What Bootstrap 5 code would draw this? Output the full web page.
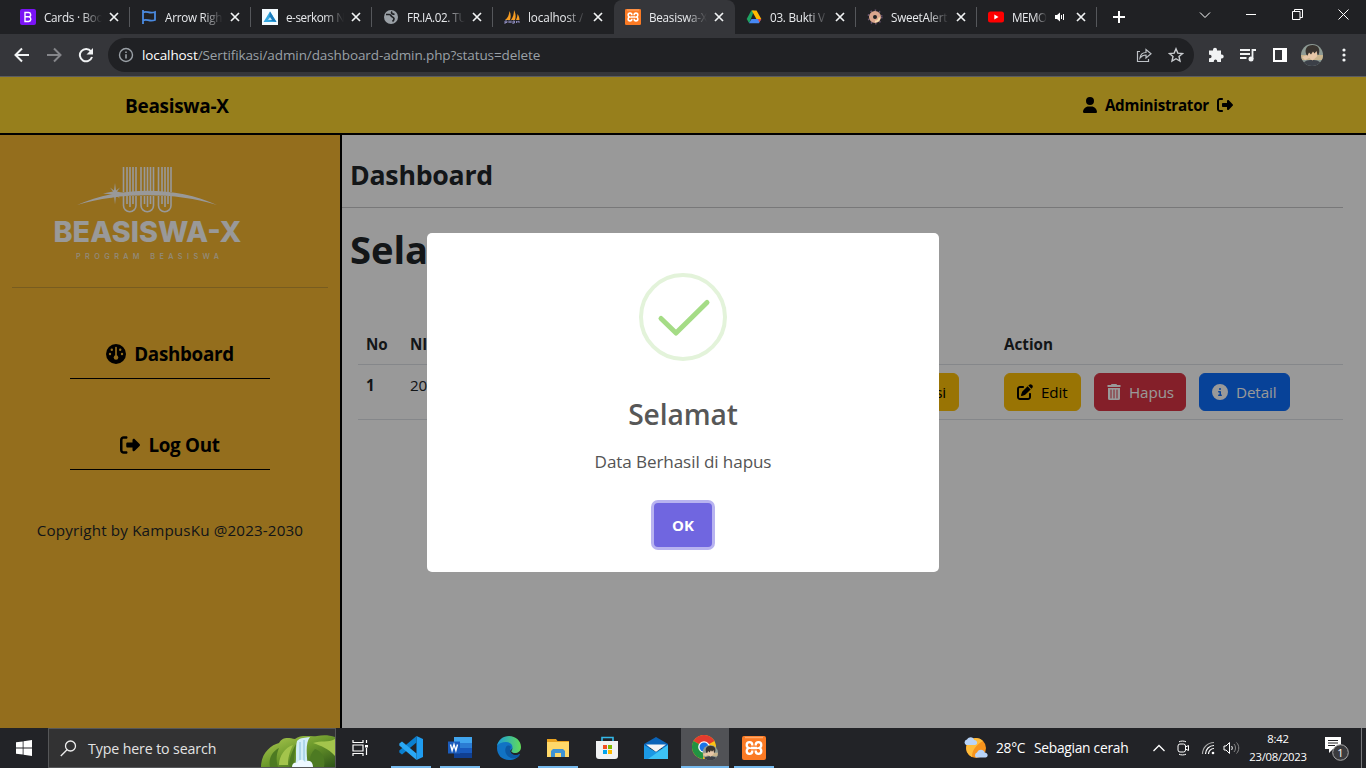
<!DOCTYPE html>
<html lang="id">
<head>
<meta charset="utf-8">
<meta name="viewport" content="width=device-width, initial-scale=1">
<title>Beasiswa-X</title>
<link href="https://cdn.jsdelivr.net/npm/bootstrap@5.3.0/dist/css/bootstrap.min.css" rel="stylesheet">
<style>
body{width:1366px;height:768px;overflow:hidden;font-family:"Open Sans","Noto Sans",sans-serif;font-size:15.2px;line-height:24px;letter-spacing:-.1px}
svg{display:block;flex:none}
.tabstrip{height:34px;background:#202124;padding-left:9px}
.tab-item{width:121px;height:34px;padding-left:11px;position:relative;color:#e8eaed}
.tab-item::after{content:"";position:absolute;right:0;top:7px;width:1px;height:20px;background:#55575b}
.tab-item.on{background:#35363a;border-radius:8px 8px 0 0}
.tab-item.on::after,.tab-item.noline::after{display:none}
.tab-title{width:58px;margin-left:8px;font-size:11.7px;line-height:16px;overflow:hidden;white-space:nowrap;letter-spacing:-.25px;-webkit-mask-image:linear-gradient(90deg,#000 65%,transparent);mask-image:linear-gradient(90deg,#000 65%,transparent)}
.tab-x{margin-left:7px}
.winctl{height:29px}
.winctl>span{width:46px;display:flex;justify-content:center;align-items:center}
.toolrow{height:43px;background:#35363a;border-bottom:1px solid #5c5d60;padding:0 6px}
.slot{width:32px;height:34px;display:flex;align-items:center;justify-content:center;flex:none}
.omni{width:1086px;height:34px;border-radius:17px;background:#202124;margin:0 6px;padding-left:10px;padding-right:2px;font-size:13.5px;letter-spacing:-.1px;color:#9aa0a6}
.omni b{font-weight:400;color:#fff}
.viewport{height:651px;position:relative}
.topbar{height:58px;background:#fcd430;border-bottom:2px solid #000;color:#000;font-weight:700;padding:0 133px 0 125px}
.admin-txt{font-size:15.2px;letter-spacing:-.25px}
.brand-txt{font-size:19px;letter-spacing:-.3px;padding-top:1px}
.side{width:342px;background:#f7b731;border-right:2px solid #000}
.side-hr{height:1px;background:#c99a35;margin:0 12px}
.side-link{width:200px;height:47px;border-bottom:1px solid #000;font-weight:700;font-size:18.8px;letter-spacing:-.3px;color:#000;padding-bottom:2px}
.main-title{font-size:26.7px;font-weight:700;line-height:34px;letter-spacing:-.25px}
.main-hello{font-size:38.2px;font-weight:700;line-height:48px}
.data-tbl{width:985px;margin:0 0 0 16px;table-layout:fixed}
.data-tbl th{font-weight:700;letter-spacing:0}
.btn{font-size:15.2px;line-height:24px;letter-spacing:-.1px;height:38px}
.btn-warning{background:#ffc107;color:#000}
.veil{position:absolute;inset:0;background:rgba(0,0,0,.4)}
.popup{width:512px;height:339px;background:#fff;border-radius:5px;padding-top:40px;color:#545454}
.popup-title{font-size:28.2px;font-weight:600;line-height:36px;margin-top:35px;color:#575757}
.popup-text{font-size:17.1px;line-height:24px;margin-top:18px}
.ok-btn{width:58px;height:44px;margin-top:29px;border-radius:4px;background:#7066e0;box-shadow:0 0 0 3px #b8b3f0;color:#fff;font-weight:700;font-size:15px;border:0}
.taskrow{height:40px;background:#222327;color:#fff}
.search-box{width:288px;height:40px;background:#323233;border:1px solid #555658;padding-left:11px;font-size:14.2px;color:#e3e3e3;position:relative}
.search-art{position:absolute;right:0;bottom:0}
.app{width:48px;height:40px;margin-right:1px;display:flex;align-items:center;justify-content:center;position:relative}
.app.run::after{content:"";position:absolute;left:4px;right:4px;bottom:0;height:2px;background:#76b9ed}
.app.now{background:#515256}.app.now::after{left:0;right:0}
.tray{width:24.25px;display:flex;justify-content:center}
.clock{width:68px;font-size:11.3px;line-height:18px;letter-spacing:-.25px}
</style>
</head>
<body class="d-flex flex-column">
<svg width="0" height="0" class="position-absolute">
<defs>
<symbol id="x" viewBox="0 0 10 10"><path d="M1 1l8 8M9 1L1 9" stroke="#f1f3f4" stroke-width="1.7"/></symbol>
<symbol id="out" viewBox="0 0 512 512"><path d="M377.9 105.9L500.7 228.7c7.2 7.2 11.3 17.1 11.3 27.3s-4.1 20.1-11.3 27.3L377.9 406.1c-6.4 6.4-15 9.9-24 9.9c-18.7 0-33.9-15.2-33.9-33.9l0-62.1-128 0c-17.7 0-32-14.3-32-32l0-64c0-17.7 14.3-32 32-32l128 0 0-62.1c0-18.7 15.2-33.9 33.9-33.9c9 0 17.6 3.6 24 9.9zM160 96L96 96c-17.7 0-32 14.3-32 32l0 256c0 17.7 14.3 32 32 32l64 0c17.7 0 32 14.3 32 32s-14.3 32-32 32l-64 0c-53 0-96-43-96-96L0 128C0 75 43 32 96 32l64 0c17.7 0 32 14.3 32 32s-14.3 32-32 32z"/></symbol>
<symbol id="xampp" viewBox="0 0 24 24"><rect width="24" height="24" rx="2" fill="#fb7a24"/><path d="M3 1.500h18" stroke="#ffa868" stroke-width="1.500"/><path d="M10.300 9.500V9a2.800 2.800 0 0 0-5.600 0c0 1.500.9 2.600 2.200 3-1.300.4-2.200 1.500-2.200 3a2.800 2.800 0 0 0 5.600 0v-.5M13.700 9.500V9a2.800 2.800 0 0 1 5.600 0c0 1.500-.9 2.600-2.200 3 1.300.4 2.200 1.500 2.200 3a2.800 2.800 0 0 1-5.600 0v-.5M9 12h6" fill="none" stroke="#fff" stroke-width="2.300"/></symbol>
<symbol id="face" viewBox="0 0 22 22"><clipPath id="fc"><circle cx="11" cy="11" r="11"/></clipPath><g clip-path="url(#fc)"><path fill="#8d9a94" d="M0 0h22v22H0z"/><path fill="#c9b48c" d="M0 11h22v5H0z"/><path fill="#3c4048" d="M1 22c1-5 5-6 10-6s9 1 10 6z"/><path fill="#e7c7a8" d="M7 6h9v6.500l-4.500 4L7 13zM1 13l5-2 2 3-4 2z"/><path fill="#39342f" d="M5.500 11C3 5 6 1 11.500 1S20 5 17.500 11l-1-.5L15.500 7l-2 2.500-1.500-2-2 3-2-2-1.500 3z"/></g></symbol>
</defs>
</svg>

<div class="tabstrip d-flex">
  <div class="tab-item d-flex align-items-center"><svg width="16" height="16" viewBox="0 0 16 16"><rect width="16" height="16" rx="2" fill="#7a13f5"/><path d="M5 3.500v9h3.600a2.400 2.400 0 0 0 .5-4.700A2.200 2.200 0 0 0 8.300 3.500zM5 7.800h3.500" fill="none" stroke="#fff" stroke-width="1.400"/></svg><span class="tab-title">Cards · Boo</span><svg class="tab-x" width="10" height="10"><use href="#x"/></svg></div>
  <div class="tab-item d-flex align-items-center"><svg width="16" height="16" viewBox="0 0 16 16"><path d="M2 1v14M2 3.500c4-2.500 6 2 12-.5v8c-6 2.500-8-2-12 .5" fill="none" stroke="#4a8ae0" stroke-width="1.800"/></svg><span class="tab-title">Arrow Righ</span><svg class="tab-x" width="10" height="10"><use href="#x"/></svg></div>
  <div class="tab-item d-flex align-items-center"><svg width="16" height="16" viewBox="0 0 16 16"><path fill="#f4fbff" d="M0 0h16v16H0z"/><path fill="#35a8e0" d="M8 2.500L14.500 13h-13z"/><path fill="#1679bb" d="M8 2.500L14.500 13 7 11z"/><path fill="#bfe7fa" d="M8 8l2 3H6z"/></svg><span class="tab-title" style="letter-spacing:-.45px">e-serkom N</span><svg class="tab-x" width="10" height="10"><use href="#x"/></svg></div>
  <div class="tab-item d-flex align-items-center"><svg width="16" height="16" viewBox="0 0 16 16"><circle cx="8" cy="8" r="7" fill="#9aa0a6"/><path d="M3 5.500h3.500c1.500 0 1.500 2 3 2.500s2.500 2.500 0 4.500M9 2.500c-1.500 2 .5 3 2.500 2.500" fill="none" stroke="#202124" stroke-width="1.700"/></svg><span class="tab-title" style="letter-spacing:-.4px">FR.IA.02. TU</span><svg class="tab-x" width="10" height="10"><use href="#x"/></svg></div>
  <div class="tab-item noline d-flex align-items-center"><svg width="16" height="16" viewBox="0 0 16 16"><path fill="#f69c22" d="M1 11C4 9 5 6 5.500 2 7 5 7 8 6 11zM7 11c2-3 3-6 3-10 2 4 2 7 1 10zM12 11c1-2 1.500-4 1.500-6 1.500 2 2 4 2 6z"/><path d="M1 15v-3h2v1.500H1M5 11.500V14m0-1h2m0-1.500V14M9 15v-3h1.500v2H9m3.500 0v-2l1 1 1.500-1v2" fill="none" stroke="#8a88b8"/></svg><span class="tab-title" style="letter-spacing:-.1px">localhost /</span><svg class="tab-x" width="10" height="10"><use href="#x"/></svg></div>
  <div class="tab-item on d-flex align-items-center"><svg width="16" height="16"><use href="#xampp"/></svg><span class="tab-title">Beasiswa-X</span><svg class="tab-x" width="10" height="10"><use href="#x"/></svg></div>
  <div class="tab-item d-flex align-items-center"><svg width="16" height="16" viewBox="0 0 16 16"><path fill="#1ea362" d="M5.300 1.500h2.900L3.200 14.300 .7 10z"/><path fill="#ffba00" d="M5.700 1.500h4.800L15.300 10h-4.900z"/><path fill="#4688f4" d="M5.500 10h9.800l-2.500 4.300H3z"/><path fill="#ea4335" d="M12 10h3.300l-2 3.500z"/></svg><span class="tab-title">03. Bukti V</span><svg class="tab-x" width="10" height="10"><use href="#x"/></svg></div>
  <div class="tab-item d-flex align-items-center"><svg width="16" height="16" viewBox="0 0 16 16"><circle cx="8" cy="8" r="6.800" fill="none" stroke="#6b5570" stroke-width="1.500" stroke-dasharray="1.500 3"/><circle cx="8" cy="8" r="4" fill="none" stroke="#dba68e" stroke-width="4"/><path d="M8 12.500a4.500 4.500 0 0 0 4.500-4" fill="none" stroke="#f7dcae" stroke-width="2"/></svg><span class="tab-title">SweetAlert</span><svg class="tab-x" width="10" height="10"><use href="#x"/></svg></div>
  <div class="tab-item d-flex align-items-center" style="width:120px"><svg width="16" height="16" viewBox="0 0 16 16"><rect y="2.500" width="16" height="11" rx="2.500" fill="#f00"/><path fill="#fff" d="M6.300 5.500L10.500 8l-4.200 2.500z"/></svg><span class="tab-title" style="width:35px;letter-spacing:-.5px">MEMO</span><svg class="ms-2" width="10" height="10" viewBox="0 0 10 10"><path fill="#fff" d="M0 3h2l3-2.500v9L2 7H0z"/><path d="M6.500 3v4M8.500 2v6" stroke="#fff"/></svg><svg style="margin-left:11px" width="10" height="10"><use href="#x"/></svg></div>
  <svg class="align-self-center" style="margin-left:15px" width="14" height="14"><path d="M7 1v12M1 7h12" stroke="#fff" stroke-width="2"/></svg>
  <div class="winctl d-flex ms-auto">
    <span><svg width="12" height="8"><path d="M1 1.500l5 5 5-5" fill="none" stroke="#fff"/></svg></span>
    <span><svg width="10" height="2"><path d="M0 .5h10" stroke="#fff"/></svg></span>
    <span><svg width="11" height="11"><path d="M.5 2.500h7.500v8H.5zM2.500 2.500V.5h8v8H8" fill="none" stroke="#fff"/></svg></span>
    <span><svg width="11" height="11"><path d="M.5.500l10 10M10.500.500l-10 10" stroke="#fff"/></svg></span>
  </div>
</div>

<div class="toolrow d-flex align-items-center">
  <span class="slot"><svg width="16" height="16"><path d="M15 8H2M8 1.500L1.500 8 8 14.500" fill="none" stroke="#f1f3f4" stroke-width="2"/></svg></span>
  <span class="slot"><svg width="16" height="16"><path d="M1 8h13M8 1.500L14.500 8 8 14.500" fill="none" stroke="#85868a" stroke-width="2"/></svg></span>
  <span class="slot"><svg width="16" height="16"><path d="M13 4.300A6.200 6.200 0 1 0 14 10" fill="none" stroke="#f1f3f4" stroke-width="2"/><path fill="#f1f3f4" d="M15 1v6.500H8.500z"/></svg></span>
  <div class="omni d-flex align-items-center">
    <svg width="16" height="16"><circle cx="8" cy="8" r="6.500" fill="none" stroke="#9aa0a6" stroke-width="1.400"/><path d="M8 7.200v4.300M8 4.500v1.600" stroke="#9aa0a6" stroke-width="1.600"/></svg>
    <span style="margin-left:8px"><b>localhost</b>/Sertifikasi/admin/dashboard-admin.php?status=delete</span>
    <span class="slot ms-auto"><svg width="16" height="16"><path d="M4 4.500H1.500v10h11V12M4 11c.5-4 3-5.500 6-5.500V2.500l5 4.300-5 4.200V8C7 8 5.500 9 4 11z" fill="none" stroke="#bdc1c6" stroke-width="1.200"/></svg></span>
    <span class="slot"><svg width="16" height="16"><path d="M8 1.800l1.800 4.300 4.700.4-3.500 3 1 4.600L8 11.700l-4 2.400 1-4.600-3.500-3 4.700-.4z" fill="none" stroke="#c8cbcf" stroke-width="1.400"/></svg></span>
  </div>
  <span class="slot"><svg width="16" height="16"><path fill="#f1f3f4" d="M1 3.500h4V2.800a2 2 0 0 1 4 0v.7h4v4h.7a2 2 0 0 1 0 4H13V15H9.200v-.8a1.700 1.700 0 0 0-3.400 0v.8H1v-3.800h.9a1.700 1.700 0 0 0 0-3.400H1z"/></svg></span>
  <span class="slot"><svg width="16" height="14"><path d="M0 2h10M0 6h10M0 10h6.500" stroke="#f1f3f4" stroke-width="1.800"/><path d="M12.500 11V2H16" fill="none" stroke="#f1f3f4" stroke-width="1.800"/><circle cx="11" cy="11" r="2.500" fill="#f1f3f4"/></svg></span>
  <span class="slot"><svg width="14" height="14"><path d="M1 1h12v12H1z" fill="none" stroke="#fff" stroke-width="2"/><path fill="#fff" d="M9 1h4v12H9z"/></svg></span>
  <span class="slot"><svg width="22" height="22"><use href="#face"/></svg></span>
  <span class="slot"><svg width="4" height="14" fill="#f1f3f4"><circle cx="2" cy="2" r="1.600"/><circle cx="2" cy="7" r="1.600"/><circle cx="2" cy="12" r="1.600"/></svg></span>
</div>

<div class="viewport d-flex flex-column">
  <header class="topbar d-flex align-items-center justify-content-between">
    <span class="brand-txt">Beasiswa-X</span>
    <span class="d-flex align-items-center gap-2">
      <svg width="14" height="16" viewBox="0 0 448 512"><path d="M224 256A128 128 0 1 0 224 0a128 128 0 1 0 0 256zm-45.700 48C79.800 304 0 383.800 0 482.300C0 498.700 13.300 512 29.700 512H418.300c16.400 0 29.700-13.300 29.700-29.700C448 383.800 368.200 304 269.700 304H178.300z"/></svg>
      <span class="admin-txt">Administrator</span>
      <svg width="16" height="16"><use href="#out"/></svg>
    </span>
  </header>
  <div class="d-flex flex-grow-1">
    <aside class="side d-flex flex-column">
      <svg width="296" height="152" viewBox="0 0 296 152">
        <g fill="none" stroke="#fff" stroke-width="1.600">
          <path d="M123.500 32v25M127 32v25M130 32v25M133 32v25M136 32v25M141 32v25M144.500 32v25M147.500 32v25M150.500 32v25M153.500 32v25M158.500 32v25M162 32v25M165 32v25M168 32v25M171 32v25"/>
          <path d="M123.500 61v9.500a6.200 6.200 0 0 0 12.500 0V61M127 61v8M130 61v11M133 61v8M141 61v9.500a6.200 6.200 0 0 0 12.500 0V61M144.500 61v8M147.500 61v11M150.500 61v8M158.500 61v9.500a6.200 6.200 0 0 0 12.500 0V61M162 61v8M165 61v11M168 61v8"/>
        </g>
        <path fill="#fff" d="M77 70C120 51 176 51 217 70 176 57 120 57 77 70z"/>
        <path fill="#fff" d="M115 48l1 7.500 4-3-3 4 8 2-8 1 3 4-4-3-1 9-1-9-4 3 3-4-10-1 10-2-3-4 4 3z"/>
        <text x="53.500" y="107" font-size="29" font-weight="800" fill="#fff" textLength="188" lengthAdjust="spacingAndGlyphs" font-family="Inter,sans-serif" letter-spacing="0">BEASISWA-X</text>
        <text x="76" y="124" font-size="7.300" font-weight="500" fill="#f3e8d0" textLength="143" font-family="Inter,sans-serif" letter-spacing="0">PROGRAM BEASISWA</text>
      </svg>
      <div class="side-hr"></div>
      <nav class="d-flex flex-column align-items-center" style="padding-top:44px">
        <a class="side-link d-flex align-items-center justify-content-center gap-2 text-decoration-none"><svg width="20" height="20" viewBox="0 0 20 20"><circle cx="10" cy="10" r="10"/><path d="M10 3.500v9" stroke="#f7b731" stroke-width="1.700" stroke-linecap="round"/><g fill="#f7b731"><circle cx="10" cy="13.500" r="2.300"/><circle cx="5.800" cy="5.800" r="1.200"/><circle cx="14.200" cy="5.800" r="1.200"/><circle cx="4" cy="10" r="1.200"/><circle cx="16" cy="10" r="1.200"/></g></svg><span>Dashboard</span></a>
        <a class="side-link d-flex align-items-center justify-content-center gap-2 text-decoration-none" style="margin-top:44px"><svg width="20" height="20"><use href="#out"/></svg><span>Log Out</span></a>
      </nav>
      <div class="text-center" style="margin-top:48px;letter-spacing:.15px">Copyright by KampusKu @2023-2030</div>
    </aside>
    <main class="flex-grow-1 bg-white">
      <div class="main-title" style="padding:23px 0 15px 8px">Dashboard</div>
      <div style="height:1px;width:1001px;background:#c8c9ca"></div>
      <div class="main-hello" style="padding:17px 0 0 8px">Sela</div>
      <table class="data-tbl table" style="margin-top:51px">
        <colgroup><col style="width:44px"><col style="width:436px"><col style="width:158px"><col></colgroup>
        <thead><tr><th>No</th><th>NI</th><th></th><th>Action</th></tr></thead>
        <tbody><tr><th>1</th><td>20</td><td class="text-end" style="padding-right:37px"><span class="btn btn-warning">si</span></td>
        <td><div class="d-flex" style="gap:13px">
          <span class="btn btn-warning d-flex align-items-center gap-2" style="width:77px"><svg width="16" height="16" viewBox="0 0 512 512"><path d="M471.600 21.700c-21.900-21.900-57.300-21.900-79.200 0L362.300 51.700l97.900 97.900 30.100-30.100c21.900-21.900 21.900-57.300 0-79.200L471.600 21.700zm-299.200 220c-6.100 6.100-10.800 13.600-13.500 21.900l-29.600 88.800c-2.900 8.600-.6 18.100 5.800 24.600s15.900 8.700 24.600 5.800l88.800-29.600c8.200-2.700 15.700-7.400 21.900-13.500L437.700 172.300 339.700 74.300 172.400 241.700zM96 64C43 64 0 107 0 160V416c0 53 43 96 96 96H352c53 0 96-43 96-96V320c0-17.700-14.300-32-32-32s-32 14.300-32 32v96c0 17.700-14.300 32-32 32H96c-17.700 0-32-14.300-32-32V160c0-17.700 14.300-32 32-32h96c17.700 0 32-14.300 32-32s-14.300-32-32-32H96z"/></svg><span>Edit</span></span>
          <span class="btn btn-danger d-flex align-items-center gap-2" style="width:92px"><svg width="14" height="16" viewBox="0 0 14 16"><path fill="#fff" d="M4.500 0h5l.5 1h3.500v2H.5V1H4zM1 4h12v10.500A1.500 1.500 0 0 1 11.500 16h-9A1.500 1.500 0 0 1 1 14.500z"/><path d="M4 6v8M7 6v8M10 6v8" stroke="#dc3545" stroke-linecap="round"/></svg><span>Hapus</span></span>
          <span class="btn btn-primary d-flex align-items-center gap-2" style="width:91px"><svg width="16" height="16" viewBox="0 0 512 512"><path fill="#fff" d="M256 512A256 256 0 1 0 256 0a256 256 0 1 0 0 512zM216 336h24V272H216c-13.300 0-24-10.700-24-24s10.700-24 24-24h48c13.300 0 24 10.700 24 24v88h8c13.300 0 24 10.700 24 24s-10.700 24-24 24H216c-13.300 0-24-10.700-24-24s10.700-24 24-24zm40-208a32 32 0 1 1 0 64 32 32 0 1 1 0-64z"/></svg><span>Detail</span></span>
        </div></td></tr></tbody>
      </table>
    </main>
  </div>
  <div class="veil d-flex align-items-center justify-content-center">
    <div class="popup d-flex flex-column align-items-center">
      <svg width="88" height="88"><circle cx="44" cy="44" r="42" fill="none" stroke="#e3f3da" stroke-width="4"/><path d="M22 45.500L37 60 68 29.500" fill="none" stroke="#a5dc86" stroke-width="5" stroke-linecap="round" stroke-linejoin="round"/></svg>
      <div class="popup-title">Selamat</div>
      <div class="popup-text">Data Berhasil di hapus</div>
      <button class="ok-btn p-0">OK</button>
    </div>
  </div>
</div>

<div class="taskrow d-flex align-items-center">
  <span class="d-flex justify-content-center" style="width:48px"><svg width="16" height="16" fill="#fff"><path d="M0 2.300L6.700 1.400v6.200H0zM7.500 1.200L16 0v7.600H7.500zM0 8.400h6.700v6.200L0 13.700zM7.500 8.400H16V16l-8.500-1.200z"/></svg></span>
  <div class="search-box d-flex align-items-center">
    <svg width="17" height="17"><circle cx="10.500" cy="6" r="5" fill="none" stroke="#eee" stroke-width="1.300"/><path d="M7 9.700L.8 16" stroke="#eee" stroke-width="1.300"/></svg>
    <span style="margin-left:11px;padding-top:2px;letter-spacing:-.12px">Type here to search</span>
    <svg class="search-art" width="74" height="32" viewBox="0 0 74 32"><defs><linearGradient id="g1" x2="1" y2="1"><stop stop-color="#b4cf55"/><stop offset=".5" stop-color="#6d9a2c"/><stop offset="1" stop-color="#2e5518"/></linearGradient></defs><path fill="url(#g1)" d="M0 32C0 18 10 10 18 8 22 1 28 3 34 4 40-1 50 2 56 1c6-1 12-1 18 1v30z"/><path fill="#4d7a22" d="M9 32c-2-9 3-16 9-19-3 7-3 13-1 19zM28 32c0-8 3-16 7-23l-3 23zM50 32c-2-8-1-13 4-18 6 2 11 8 9 18z"/><path fill="#a3c44c" d="M18 30c0-8 5-17 14-20-4 8-5 14-5 20zM52 8c8-3 15 0 22-4v17c-7-8-14-10-22-13z"/><path fill="#d3edf8" d="M36 6c4-4 8-3 13-4-4 5-4 14-2 30H34c2-9 0-18 2-26z"/><path d="M39 7v22M43 5v25" stroke="#8ac0da"/><path fill="#eef9ff" d="M31 32c0-4 3-5 5-4 2-4 6-4 8-1 4-3 8 0 8 5z"/></svg>
  </div>
  <span class="d-flex justify-content-center" style="width:48px;margin-right:3px"><svg width="17" height="16" fill="none" stroke="#fff" stroke-width="1.200"><path d="M1 0v2.500h10V0M1 5h10v6H1zM1 16v-2.500h10V16M14.500 0v3M14.500 8v7"/><path d="M13 5h3v2.500h-3z" fill="#fff" stroke="none"/></svg></span>
  <span class="app run"><svg width="24" height="24"><path fill="#1f9cf0" d="M17.500 0L24 3v18l-6.500 3z"/><path fill="#0a7fcf" d="M17.500 0v6.500L3 18.500.3 16.500v-2z"/><path fill="#2aa8f5" d="M.3 9.500v-2L3 5.500l14.500 12V24z"/></svg></span>
  <span class="app run"><svg width="24" height="22"><path fill="#41a5ee" d="M6 0h18v6H6z"/><path fill="#2b7cd3" d="M6 6h18v5H6z"/><path fill="#185abd" d="M6 11h18v5H6z"/><path fill="#103f91" d="M6 16h18v5H6z"/><path fill="#1b5cbd" d="M0 4.500h12v12H0z"/><path d="M2.500 7.500l1.600 6 1.900-6 1.900 6 1.600-6" fill="none" stroke="#fff" stroke-width="1.400"/></svg></span>
  <span class="app"><svg width="24" height="24"><defs><linearGradient id="g2"><stop stop-color="#199bdc"/><stop offset="1" stop-color="#62dc58"/></linearGradient></defs><path fill="#1173c4" d="M0 12C0 5 6 2 12 2l5 9-4 4c1 5 6 5 10 3-2 4-6 6-11 6C5 24 0 19 0 12z"/><path fill="url(#g2)" d="M0 10C1 4 6 0 12 0c7 0 12 5 12 11 0 4-3 6-6 6-2 0-5-1-3-3 2-5-2-8-6-8-4 0-7 1-9 4z"/><path fill="#0c59a4" d="M9 11c-3 6 3 13 10 11 2-1 3-2 4-4-4 2-10 1-10-4 0-2 1-3 1-3-1-2-4-2-5 0z"/></svg></span>
  <span class="app run"><svg width="22" height="18"><path fill="#e9a21f" d="M0 0h9l1.500 2H22v3H0z"/><path fill="#ffd869" d="M0 3h22v15H0z"/><path fill="#3f93d3" d="M4 18v-6l2-2h10l2 2v6h-4v-4H8v4z"/></svg></span>
  <span class="app"><svg width="24" height="24"><path d="M7 5V1.500h11V5" fill="none" stroke="#34b8e8" stroke-width="1.600"/><path fill="#f1f2f3" d="M1 5h22v15a3 3 0 0 1-3 3H4a3 3 0 0 1-3-3z"/><path fill="#f25022" d="M8 9h4v4H8z"/><path fill="#7fba00" d="M13 9h4v4h-4z"/><path fill="#00a4ef" d="M8 14h4v4H8z"/><path fill="#ffb900" d="M13 14h4v4h-4z"/></svg></span>
  <span class="app"><svg width="24" height="22"><path fill="#0b64b8" d="M0 7L12 0l12 7v4H0z"/><path fill="#f5f5f5" d="M2 7.500h20L12 15z"/><path fill="#1b98e4" d="M0 8l12 7 12-7v14H0z"/><path fill="#3dc3f5" d="M24 8v14H4z"/></svg></span>
  <span class="app run now"><svg width="26" height="26" viewBox="0 0 26 26"><circle cx="12" cy="12" r="12" fill="#fbc116"/><path fill="#e33b2e" d="M12 12L1.600 6A12 12 0 0 1 22.400 6z"/><path fill="#229342" d="M12 12l-1 12A12 12 0 0 1 1.600 6z"/><circle cx="12" cy="12" r="5.800" fill="#fff"/><circle cx="12" cy="12" r="4.500" fill="#1a73e8"/><svg x="10.500" y="10" width="15.500" height="15.500"><use href="#face"/></svg></svg></span>
  <span class="app run"><svg width="24" height="24"><use href="#xampp"/></svg></span>
  <div class="d-flex align-items-center ms-auto" style="width:183px;font-size:13.8px">
    <svg width="24" height="24"><circle cx="12" cy="12" r="10" fill="#f7941d"/><path fill="#ffbc3b" d="M5 5a10 10 0 0 0 3 16c0-7 4-12 11-16-4-4-10-4-14 0z"/><path fill="#b9d4f8" d="M2 9a3 3 0 0 1 1-5.500C5 0 10 1 10 4c4 0 4 5 1 5zM12 21.500a3 3 0 0 1 1-5c2-4 7-3 7.500 0 4 0 4 5 1 5z"/></svg>
    <span style="margin-left:8px;width:38px;letter-spacing:-.3px">28°C</span><span class="text-nowrap" style="letter-spacing:-.28px">Sebagian cerah</span>
  </div>
  <span class="tray"><svg width="12" height="8"><path d="M.5 7L6 1.500 11.500 7" fill="none" stroke="#fff" stroke-width="1.300"/></svg></span>
  <span class="tray"><svg width="12" height="16" fill="none" stroke="#fff"><rect x="1" y="4" width="7.500" height="8" rx="2"/><path d="M8.500 7l3-1.500v5l-3-1.500M2 1.800c2-1 5-1 7 0M2 14.200c2 1 5 1 7 0"/></svg></span>
  <span class="tray"><svg width="14" height="14" fill="none" stroke="#aaa" stroke-width="1.200"><path d="M1.500 13A11.500 11.500 0 0 1 13 1.500"/><path d="M4.500 13A8.500 8.500 0 0 1 13 4.500M7.500 13A5.500 5.500 0 0 1 13 7.500" stroke="#fff"/><circle cx="12" cy="12" r="1.300" fill="#fff" stroke="none"/></svg></span>
  <span class="tray"><svg width="17" height="14" fill="none" stroke="#fff"><path d="M1 5h2l3.500-3.500v11L3 9H1zM8.500 5c1 1 1 3 0 4"/><path d="M11 3c2 2 2 6 0 8M13.500 1.500c3 3 3 8 0 11" stroke="#888"/></svg></span>
  <div class="clock text-center">8:42<br>23/08/2023</div>
  <span style="width:49px;padding-left:13px"><svg width="26" height="26" viewBox="0 0 26 26"><path fill="#fff" d="M0 2h16v12h-8l-4 4v-4H0z"/><path d="M3 5.500h10M3 8h10M3 10.500h7" stroke="#222327"/><circle cx="15.500" cy="17.500" r="7.800" fill="#3b3b3e" stroke="#aaa"/><text x="15.500" y="21.500" font-size="11" fill="#fff" text-anchor="middle" letter-spacing="0">1</text></svg></span>
  <span style="width:5px;height:40px;border-left:1px solid #77787b"></span>
</div>
<script src="https://cdn.jsdelivr.net/npm/bootstrap@5.3.0/dist/js/bootstrap.bundle.min.js"></script>
</body>
</html>
